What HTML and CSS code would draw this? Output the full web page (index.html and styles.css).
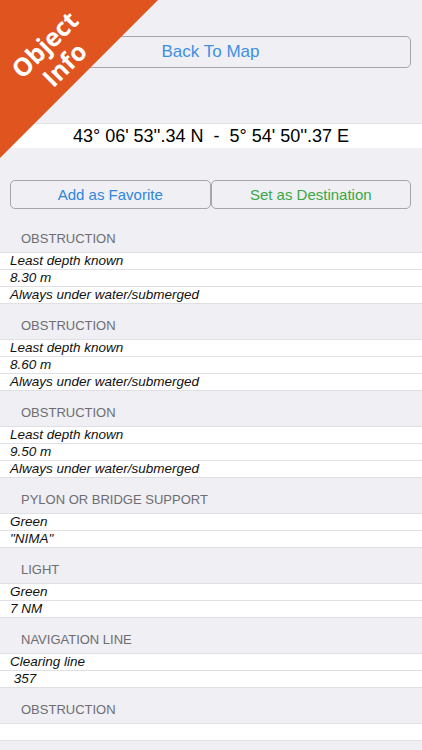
FILE: index.html
```html
<!DOCTYPE html>
<html>
<head>
<meta charset="utf-8">
<link rel="stylesheet" href="styles.css">
</head>
<body>
<div class="page">
  <div class="top">
    <button class="btn btn-back">Back To Map</button>
  </div>
  <div class="coords">43° 06' 53''.34 N  -  5° 54' 50''.37 E</div>
  <div class="actions">
    <button class="btn btn-fav">Add as Favorite</button>
    <button class="btn btn-dest">Set as Destination</button>
  </div>

  <div class="header first">OBSTRUCTION</div>
  <div class="rows">
    <div class="row">Least depth known</div>
    <div class="row">8.30 m</div>
    <div class="row">Always under water/submerged</div>
  </div>

  <div class="header">OBSTRUCTION</div>
  <div class="rows">
    <div class="row">Least depth known</div>
    <div class="row">8.60 m</div>
    <div class="row">Always under water/submerged</div>
  </div>

  <div class="header">OBSTRUCTION</div>
  <div class="rows">
    <div class="row">Least depth known</div>
    <div class="row">9.50 m</div>
    <div class="row">Always under water/submerged</div>
  </div>

  <div class="header">PYLON OR BRIDGE SUPPORT</div>
  <div class="rows">
    <div class="row">Green</div>
    <div class="row">"NIMA"</div>
  </div>

  <div class="header">LIGHT</div>
  <div class="rows">
    <div class="row">Green</div>
    <div class="row">7 NM</div>
  </div>

  <div class="header">NAVIGATION LINE</div>
  <div class="rows">
    <div class="row">Clearing line</div>
    <div class="row"> 357</div>
  </div>

  <div class="header">OBSTRUCTION</div>
  <div class="rows">
    <div class="row"></div>
  </div>
</div>

<div class="ribbon">
  <div class="ribbon-text"><span>Object</span><span>Info</span></div>
</div>
</body>
</html>
```

FILE: styles.css
```css
html, body {
  margin: 0;
  padding: 0;
}
body {
  background: #efeff4;
  font-family: "Liberation Sans", Arial, sans-serif;
  width: 422px;
  height: 750px;
  overflow: hidden;
  position: relative;
}
.page {
  display: flex;
  flex-direction: column;
}
.top {
  padding: 36px 11px 0 10px;
}
.btn {
  font-family: "Liberation Sans", Arial, sans-serif;
  background: #efeff4;
  border: 1px solid #a6a6aa;
  border-radius: 5px;
  padding: 0;
  margin: 0;
  cursor: pointer;
}
.btn-back {
  width: 100%;
  height: 32px;
  font-size: 17px;
  color: #3f8fe2;
}
.coords {
  margin-top: 55px;
  height: 24px;
  line-height: 24px;
  background: #fff;
  border-top: 1px solid #e2e2e6;
  text-align: center;
  font-size: 18px;
  color: #000;
  white-space: pre;
}
.actions {
  margin-top: 32px;
  padding: 0 11px 0 10px;
  display: flex;
  height: 29px;
}
.actions .btn {
  flex: 1;
  height: 29px;
  font-size: 15px;
}
.btn-fav {
  color: #2f86dc;
}
.btn-dest {
  color: #3aa845;
}
.header {
  height: 35px;
  display: flex;
  align-items: flex-end;
  padding: 0 0 5px 21px;
  box-sizing: border-box;
  font-size: 13px;
  line-height: 16px;
  color: #6d6d72;
}
.header.first {
  height: 43px;
}
.rows {
  background: #fff;
  border-top: 1px solid #e0e0e4;
}
.row {
  height: 16px;
  line-height: 16px;
  border-bottom: 1px solid #e0e0e4;
  padding-left: 10px;
  font-size: 13.5px;
  font-style: italic;
  color: #111;
  white-space: pre;
}
.ribbon {
  position: absolute;
  top: 0;
  left: 0;
  width: 158px;
  height: 158px;
  background: #e0541f;
  clip-path: polygon(0 0, 100% 0, 0 100%);
}
.ribbon-text {
  position: absolute;
  left: 54px;
  top: 54px;
  width: 150px;
  transform: translate(-50%, -50%) rotate(-45deg);
  display: flex;
  flex-direction: column;
  align-items: center;
  color: #fff;
  font-family: "Open Sans", "Liberation Sans", sans-serif;
  font-weight: 700;
  font-size: 25px;
  line-height: 28px;
}
```
